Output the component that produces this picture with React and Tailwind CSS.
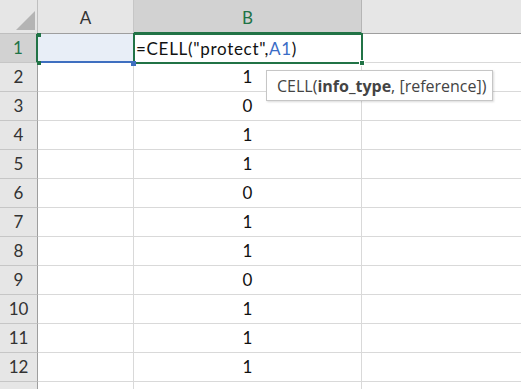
import React from 'react';

const values = [null, 1, 0, 1, 1, 0, 1, 1, 0, 1, 1, 1, null];

const font = { fontFamily: 'Lato, "Open Sans", sans-serif' };
const tipFont = { fontFamily: '"Open Sans", Lato, sans-serif' };

const App = () => {
    return (
        <div className="w-[521px] h-[389px] overflow-hidden bg-white relative select-none" style={font}>
            {/* header row */}
            <div className="flex h-[34px]">
                <div className="w-[38px] h-full bg-[#e6e6e6] border-r border-b border-[#bfbfbf] relative">
                    <svg width="38" height="34" className="absolute inset-0">
                        <polygon points="35,11 35,30 16,30" fill="#b4b4b4" />
                    </svg>
                </div>
                <div className="w-[96px] h-full bg-[#e6e6e6] border-r border-[#c6c6c6] border-b border-b-[#9e9e9e] flex items-end justify-center pb-[3px] text-[17px] text-[#333]">
                    A
                </div>
                <div className="w-[228px] h-full bg-[#d2d2d2] border-r border-[#b5b5b5] border-b-2 border-b-[#217346] flex items-end justify-center pb-[2px] text-[17px] text-[#217346]">
                    B
                </div>
                <div className="flex-1 h-full bg-[#e6e6e6] border-b border-[#9e9e9e]" />
            </div>

            {values.map((v, i) => {
                const row = i + 1;
                const active = row === 1;
                return (
                    <div key={row} className="flex h-[29px]">
                        <div
                            className={`w-[38px] h-full border-b border-[#c6c6c6] flex items-center justify-center text-[17px] ${
                                active
                                    ? 'bg-[#d2d2d2] text-[#217346] border-r-2 border-r-[#217346]'
                                    : 'bg-[#e6e6e6] text-[#333] border-r border-r-[#9e9e9e]'
                            }`}
                        >
                            {row < 13 ? row : ''}
                        </div>
                        <div
                            className={`w-[96px] h-full border-r border-[#d9d9d9] ${
                                active ? 'bg-[#e8eef7] border-b-2 border-b-[#3f6fc0]' : 'border-b'
                            }`}
                        />
                        <div className="w-[228px] h-full border-r border-b border-[#d9d9d9] flex items-center justify-center text-[17px] text-[#111] relative">
                            {active ? (
                                <span className="absolute left-[2px] top-[2px] text-[#111] whitespace-nowrap tracking-[0.7px]">
                                    =CELL("protect",<span className="text-[#3a6cc6]">A1</span>)
                                </span>
                            ) : (
                                v
                            )}
                        </div>
                        <div className="flex-1 h-full border-b border-[#d9d9d9]" />
                    </div>
                );
            })}

            {/* active cell B1 */}
            <div className="absolute left-[133px] top-[33px] w-[230px] h-[31px] border-2 border-[#217346] pointer-events-none" />
            <div className="absolute left-[359px] top-[60px] w-[6px] h-[6px] bg-[#217346] border border-white" />
            {/* A1 reference handles */}
            <div className="absolute left-[37px] top-[33px] w-[4px] h-[4px] bg-[#217346]" />
            <div className="absolute left-[37px] top-[61px] w-[4px] h-[4px] bg-[#217346]" />
            <div className="absolute left-[131px] top-[61px] w-[5px] h-[5px] bg-[#3f6fc0]" />

            {/* tooltip */}
            <div
                className="absolute left-[266px] top-[70px] w-[227px] h-[31px] bg-white border border-[#c6c6c6] shadow-[1px_1px_2px_rgba(0,0,0,0.15)] flex items-center pl-[10px] text-[16px] text-[#444] whitespace-nowrap"
                style={tipFont}
            >
                CELL(<span className="font-bold">info_type</span>, [reference])
            </div>
        </div>
    );
};

export default App;
